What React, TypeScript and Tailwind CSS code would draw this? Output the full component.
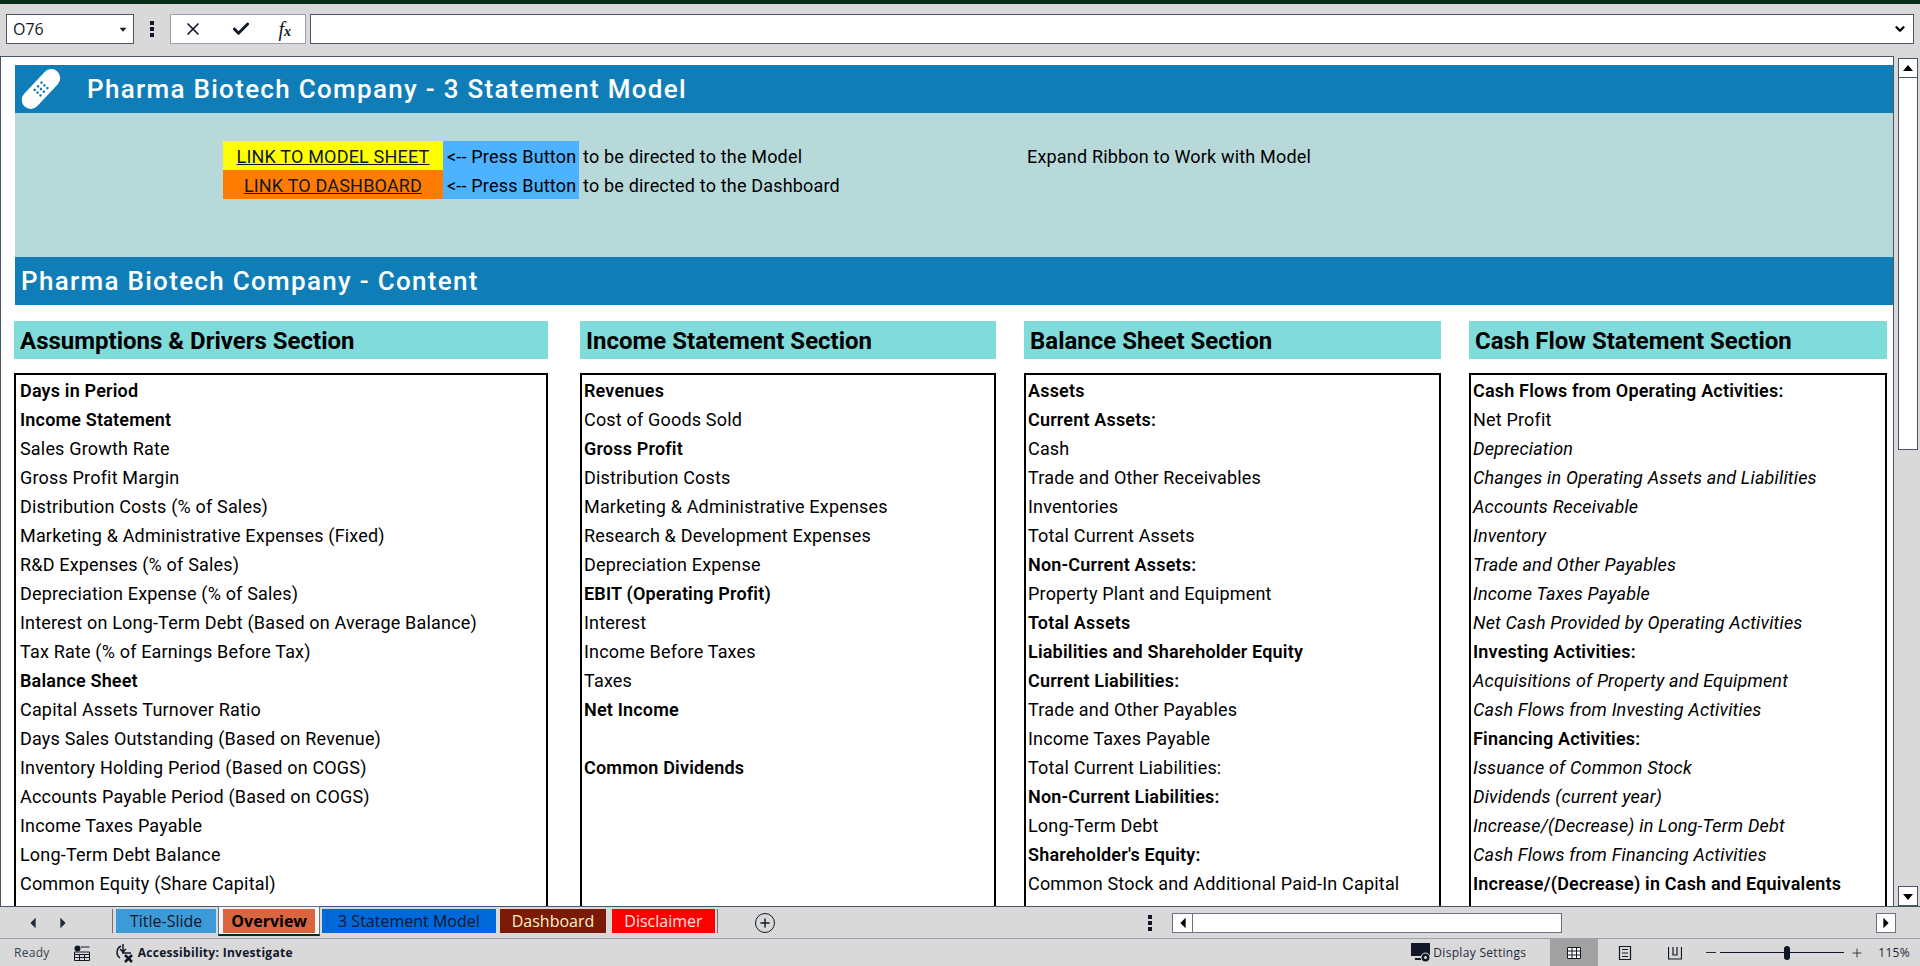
import { Check, ChevronDown, Plus, X } from "lucide-react";

type Row = { text: string; bold?: boolean; italic?: boolean };

const b = (text: string): Row => ({ text, bold: true });
const n = (text: string): Row => ({ text });
const i = (text: string): Row => ({ text, italic: true });

const bodyText = "text-lg tracking-[0.01em] text-black";

const sections: { title: string; rows: Row[]; className: string; padClass: string }[] = [
  {
    title: "Assumptions & Drivers Section",
    className: "pr-1",
    padClass: "pl-1",
    rows: [
      b("Days in Period"),
      b("Income Statement"),
      n("Sales Growth Rate"),
      n("Gross Profit Margin"),
      n("Distribution Costs (% of Sales)"),
      n("Marketing & Administrative Expenses (Fixed)"),
      n("R&D Expenses (% of Sales)"),
      n("Depreciation Expense (% of Sales)"),
      n("Interest on Long-Term Debt (Based on Average Balance)"),
      n("Tax Rate (% of Earnings Before Tax)"),
      b("Balance Sheet"),
      n("Capital Assets Turnover Ratio"),
      n("Days Sales Outstanding (Based on Revenue)"),
      n("Inventory Holding Period (Based on COGS)"),
      n("Accounts Payable Period (Based on COGS)"),
      n("Income Taxes Payable"),
      n("Long-Term Debt Balance"),
      n("Common Equity (Share Capital)"),
    ],
  },
  {
    title: "Income Statement Section",
    className: "",
    padClass: "pl-0.5",
    rows: [
      b("Revenues"),
      n("Cost of Goods Sold"),
      b("Gross Profit"),
      n("Distribution Costs"),
      n("Marketing & Administrative Expenses"),
      n("Research & Development Expenses"),
      n("Depreciation Expense"),
      b("EBIT (Operating Profit)"),
      n("Interest"),
      n("Income Before Taxes"),
      n("Taxes"),
      b("Net Income"),
      n(""),
      b("Common Dividends"),
    ],
  },
  {
    title: "Balance Sheet Section",
    className: "",
    padClass: "pl-0.5",
    rows: [
      b("Assets"),
      b("Current Assets:"),
      n("Cash"),
      n("Trade and Other Receivables"),
      n("Inventories"),
      n("Total Current Assets"),
      b("Non-Current Assets:"),
      n("Property Plant and Equipment"),
      b("Total Assets"),
      b("Liabilities and Shareholder Equity"),
      b("Current Liabilities:"),
      n("Trade and Other Payables"),
      n("Income Taxes Payable"),
      n("Total Current Liabilities:"),
      b("Non-Current Liabilities:"),
      n("Long-Term Debt"),
      b("Shareholder's Equity:"),
      n("Common Stock and Additional Paid-In Capital"),
    ],
  },
  {
    title: "Cash Flow Statement Section",
    className: "",
    padClass: "pl-0.5",
    rows: [
      b("Cash Flows from Operating Activities:"),
      n("Net Profit"),
      i("Depreciation"),
      i("Changes in Operating Assets and Liabilities"),
      i("Accounts Receivable"),
      i("Inventory"),
      i("Trade and Other Payables"),
      i("Income Taxes Payable"),
      i("Net Cash Provided by Operating Activities"),
      b("Investing Activities:"),
      i("Acquisitions of Property and Equipment"),
      i("Cash Flows from Investing Activities"),
      b("Financing Activities:"),
      i("Issuance of Common Stock"),
      i("Dividends (current year)"),
      i("Increase/(Decrease) in Long-Term Debt"),
      i("Cash Flows from Financing Activities"),
      b("Increase/(Decrease) in Cash and Equivalents"),
    ],
  },
];

const tabs = [
  { label: "Title-Slide", className: "bg-[#3d9ad9] px-3.5 text-gray-900" },
  { label: "Overview", className: "bg-[#d9663f] px-2 text-black font-bold", active: true },
  { label: "3 Statement Model", className: "bg-[#0068d9] px-4 text-gray-900" },
  { label: "Dashboard", className: "bg-[#7b1a06] px-3 text-amber-100" },
  { label: "Disclaimer", className: "ml-0.5 bg-[#ff0000] px-3 text-red-100" },
];

function Triangle({ dir, className }: { dir: "left" | "right" | "up" | "down"; className?: string }) {
  const points = {
    left: "8,2 8,14 2,8",
    right: "2,2 2,14 8,8",
    up: "1,9 11,9 6,3",
    down: "1,4 11,4 6,10",
  }[dir];
  const box = dir === "left" || dir === "right" ? "0 0 10 16" : "0 0 12 12";
  return (
    <svg viewBox={box} className={className} fill="currentColor">
      <polygon points={points} />
    </svg>
  );
}

function Dots() {
  return (
    <div className="flex flex-col gap-0.5">
      <span className="size-1 bg-gray-900" />
      <span className="size-1 bg-gray-900" />
      <span className="size-1 bg-gray-900" />
    </div>
  );
}

function Bandage() {
  return (
    <svg viewBox="0 0 44 44" className="size-11 shrink-0">
      <rect x="-2" y="13" width="48" height="18" rx="9" fill="white" transform="rotate(-47 22 22)" />
      <g fill="#0f7eb8" transform="rotate(-47 22 22)">
        <circle cx="17" cy="18" r="1.3" />
        <circle cx="22" cy="18" r="1.3" />
        <circle cx="27" cy="18" r="1.3" />
        <circle cx="17" cy="22" r="1.3" />
        <circle cx="22" cy="22" r="1.3" />
        <circle cx="27" cy="22" r="1.3" />
        <circle cx="17" cy="26" r="1.3" />
        <circle cx="22" cy="26" r="1.3" />
        <circle cx="27" cy="26" r="1.3" />
      </g>
    </svg>
  );
}

function FormulaBar() {
  return (
    <div className="flex items-center px-1.5 pt-2.5 pb-3">
      <div className="flex h-7.5 w-32 items-center justify-between border border-gray-600 bg-white pr-1 pl-1.5 font-['Open_Sans',sans-serif] text-base text-gray-900">
        <span>O76</span>
        <Triangle dir="down" className="mr-0.5 size-2" />
      </div>
      <div className="flex w-9 justify-center">
        <Dots />
      </div>
      <div className="flex h-7.5 w-34 items-center justify-between border border-gray-400 bg-white pr-3.5 pl-3">
        <X className="size-5 text-gray-900" strokeWidth={2} />
        <Check className="size-5 text-gray-900" strokeWidth={3.5} />
        <span className="font-['Liberation_Serif',serif] text-xl text-gray-900 italic">
          f<span className="text-sm font-bold">x</span>
        </span>
      </div>
      <div className="ml-1 flex h-7.5 flex-1 items-center justify-end border border-gray-600 bg-white pr-1.5">
        <ChevronDown className="size-3.5 text-black" strokeWidth={4} />
      </div>
    </div>
  );
}

function LinkRow({ label, color, note, extra }: { label: string; color: string; note: string; extra?: string }) {
  return (
    <div className={`flex h-[29px] items-center ${bodyText}`}>
      <div className={`flex h-full w-55 items-center justify-center pt-0.5 text-gray-900 underline ${color}`}>{label}</div>
      <div className="flex h-full w-34 items-center bg-[#4db2ff] pt-0.5 pl-1 whitespace-nowrap">{"<-- Press Button"}</div>
      <div className="w-112 pt-0.5 pl-1">{note}</div>
      {extra && <div className="pt-0.5">{extra}</div>}
    </div>
  );
}

function Section({ title, rows, className, padClass }: { title: string; rows: Row[]; className: string; padClass: string }) {
  return (
    <div className={`flex min-h-0 flex-col ${className}`}>
      <h2 className="flex h-9.5 items-center bg-[#80dbdb] pt-0.5 pl-1.5 text-2xl font-bold text-black">{title}</h2>
      <div className={`mt-3.5 flex-1 overflow-hidden border-2 border-b-0 border-black pt-px ${padClass}`}>
        <div className="grid auto-rows-[29px]">
          {rows.map((row, idx) => (
            <div
              key={idx}
              className={`flex items-center whitespace-nowrap ${bodyText} ${row.bold ? "font-semibold" : ""} ${row.italic ? "italic" : ""}`}
            >
              {row.text}
            </div>
          ))}
        </div>
      </div>
    </div>
  );
}

function Sheet() {
  return (
    <div className="flex min-h-0 flex-1 flex-col border-x border-t border-gray-600 bg-white pt-2 pl-3.5">
      <div className="flex h-12 items-center gap-6 bg-[#0f7eb8] pl-1">
        <Bandage />
        <h1 className="text-[26px] font-medium tracking-wider text-white">Pharma Biotech Company - 3 Statement Model</h1>
      </div>
      <div className="h-36 bg-[#b8d9da] pt-7 pl-52">
        <LinkRow
          label="LINK TO MODEL SHEET"
          color="bg-[#ffff00]"
          note="to be directed to the Model"
          extra="Expand Ribbon to Work with Model"
        />
        <LinkRow label="LINK TO DASHBOARD" color="bg-[#ff7c00]" note="to be directed to the Dashboard" />
      </div>
      <div className="flex h-12 items-center bg-[#0f7eb8] pl-1.5">
        <h1 className="text-[26px] font-medium tracking-wider text-white">Pharma Biotech Company - Content</h1>
      </div>
      <div className="mt-4 -ml-px grid min-h-0 flex-1 grid-cols-[538px_416px_417px_418px] gap-x-7">
        {sections.map((section) => (
          <Section key={section.title} {...section} />
        ))}
      </div>
    </div>
  );
}

function VScroll() {
  return (
    <div className="mr-0.5 ml-1 flex w-5 flex-col pt-0.5 text-black">
      <div className="flex h-5 items-center justify-center border border-gray-600 bg-white">
        <Triangle dir="up" className="size-3" />
      </div>
      <div className="h-93 border-x border-b border-gray-600 bg-white" />
      <div className="flex-1" />
      <div className="flex h-5 items-center justify-center border border-gray-600 bg-white">
        <Triangle dir="down" className="size-3" />
      </div>
    </div>
  );
}

function TabBar() {
  return (
    <div className="flex h-8 shrink-0 items-center border-t border-gray-600">
      <div className="flex h-full w-28 items-center gap-5 pl-7 text-gray-800">
        <Triangle dir="left" className="h-3.5 w-2.5" />
        <Triangle dir="right" className="h-3.5 w-2.5" />
      </div>
      <div className="flex h-full items-start">
        <div className="mt-0.5 h-6 w-0.5 border-l border-gray-500" />
        {tabs.map((tab) => (
          <div
            key={tab.label}
            className={
              tab.active
                ? "-mt-px flex h-7.5 items-start border-x border-t border-b-2 border-gray-500 border-b-green-950 bg-gray-100 px-1 pt-0.5"
                : "flex h-full items-start px-0.5 pt-0.5"
            }
          >
            <div className={`flex h-6 items-center font-['Open_Sans',sans-serif] text-base ${tab.className}`}>
              {tab.label}
            </div>
          </div>
        ))}
        <div className="mt-0.5 h-6 w-0.5 border-l border-gray-500" />
      </div>
      <div className="ml-9 flex size-5 items-center justify-center rounded-full border border-gray-900">
        <Plus className="size-3.5 text-gray-900" strokeWidth={2.5} />
      </div>
      <div className="ml-auto flex items-center">
        <Dots />
        <div className="mr-6 ml-5 flex h-5 w-181 text-black">
          <div className="flex border border-gray-500 bg-white">
            <div className="flex w-5 items-center justify-center border-r border-gray-500">
              <Triangle dir="left" className="h-3.5 w-2.5" />
            </div>
            <div className="w-92" />
          </div>
          <div className="flex-1" />
          <div className="flex w-5 items-center justify-center border border-gray-500 bg-white">
            <Triangle dir="right" className="h-3.5 w-2.5" />
          </div>
        </div>
      </div>
    </div>
  );
}

function StatusBar() {
  return (
    <div className="flex h-7 shrink-0 items-center border-t border-gray-400 font-['Open_Sans',sans-serif] text-xs tracking-wide text-gray-700">
      <span className="ml-3.5">Ready</span>
      <svg viewBox="0 0 16 16" className="ml-6 size-4 text-gray-900" fill="none" stroke="currentColor">
        <circle cx="3.5" cy="3.5" r="3" fill="currentColor" stroke="none" />
        <path d="M7 2h8.5M0.5 7h15v8.5H0.5zM0.5 9.5h15M5.5 9.5v6M10.5 9.5v6M0.5 12.5h15" />
      </svg>
      <svg viewBox="0 0 20 20" className="ml-6 size-5 text-gray-900" fill="none" stroke="currentColor" strokeWidth="1.5">
        <path d="M7 3a7 7 0 0 0-1 12M9 1v7M6 6l3 3 3-3M8 10h9" />
        <path d="M11 12l7 7M18 12l-7 7" strokeWidth="2.5" />
      </svg>
      <span className="ml-1 font-bold text-gray-900">Accessibility: Investigate</span>
      <div className="ml-auto flex h-full items-center">
        <svg viewBox="0 0 20 20" className="size-5 text-gray-900" fill="currentColor">
          <path d="M0 0h19v13H0zM4 15h7v2H4z" />
          <circle cx="14.5" cy="14.5" r="4.5" stroke="#d9d9d9" strokeWidth="1" />
          <circle cx="14.5" cy="14.5" r="1.5" fill="#d9d9d9" />
        </svg>
        <span className="ml-0.5 text-gray-800">Display Settings</span>
        <div className="ml-6 flex h-full w-12 items-center justify-center bg-neutral-400">
          <svg viewBox="0 0 14 12" className="h-3 w-3.5 bg-white text-gray-900" fill="none" stroke="currentColor">
            <path d="M.5.5h13v11H.5zM.5 4h13M.5 8h13M5 .5v11M9.5 .5v11" />
          </svg>
        </div>
        <svg viewBox="0 0 14 14" className="ml-5 size-3.5 text-gray-900" fill="none" stroke="currentColor">
          <path d="M1.5.5h11v13h-11zM4 3.5h6M4 7h6M4 10.5h6" strokeWidth="1.2" />
        </svg>
        <svg viewBox="0 0 14 14" className="ml-9 size-3.5 text-gray-900" fill="none" stroke="currentColor">
          <path d="M.5 1v12h13V1M5 1v8h4V1" strokeWidth="1.2" />
        </svg>
        <div className="ml-6 h-px w-2.5 bg-gray-800" />
        <div className="ml-1 flex w-31 items-center">
          <div className="h-px w-16 bg-gray-900" />
          <div className="h-3.5 w-1.5 rounded-sm bg-gray-900" />
          <div className="h-px flex-1 bg-gray-900" />
        </div>
        <Plus className="ml-1.5 size-3.5 text-gray-800" strokeWidth={1.5} />
        <span className="mr-2.5 ml-3.5 text-gray-800">115%</span>
      </div>
    </div>
  );
}

export default function App() {
  return (
    <div className="flex h-screen w-full flex-col overflow-hidden bg-[#d9d9d9] font-['Roboto',sans-serif]">
      <div className="h-1 shrink-0 bg-green-950" />
      <FormulaBar />
      <div className="flex min-h-0 flex-1">
        <Sheet />
        <VScroll />
      </div>
      <TabBar />
      <StatusBar />
    </div>
  );
}
